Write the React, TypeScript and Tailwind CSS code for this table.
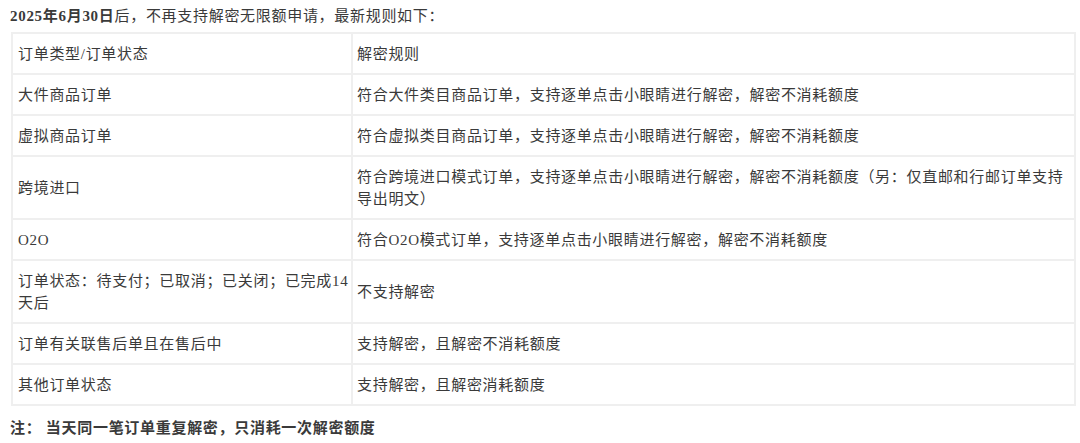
import React from "react";

const rows: [string, string][] = [
  ["订单类型/订单状态", "解密规则"],
  ["大件商品订单", "符合大件类目商品订单，支持逐单点击小眼睛进行解密，解密不消耗额度"],
  ["虚拟商品订单", "符合虚拟类目商品订单，支持逐单点击小眼睛进行解密，解密不消耗额度"],
  ["跨境进口", "符合跨境进口模式订单，支持逐单点击小眼睛进行解密，解密不消耗额度（另：仅直邮和行邮订单支持导出明文）"],
  ["O2O", "符合O2O模式订单，支持逐单点击小眼睛进行解密，解密不消耗额度"],
  ["订单状态：待支付；已取消；已关闭；已完成14天后", "不支持解密"],
  ["订单有关联售后单且在售后中", "支持解密，且解密不消耗额度"],
  ["其他订单状态", "支持解密，且解密消耗额度"],
];

export default function App() {
  return (
    <div
      className="w-[1080px] h-[443px] bg-white text-[#3a3a3a] text-[15px] tracking-[0.7px] leading-[22px] overflow-hidden"
      style={{ fontFamily: '"Liberation Serif", "Noto Sans CJK SC", serif' }}
    >
      <div className="pl-[10px] pt-[4px] h-[30px] leading-[24px]">
        <span className="font-bold">2025年6月30日</span>后，不再支持解密无限额申请，最新规则如下：
      </div>
      <table className="ml-[11px] mt-[2px] w-[1065px] border-collapse border-2 border-[#efefef]">
        <tbody>
          {rows.map(([a, b], i) => (
            <tr key={i}>
              <td className="w-[340px] border-2 border-[#efefef] pl-[5px] pr-0 pt-[9px] pb-[8px] align-middle break-all">{a}</td>
              <td className="border-2 border-[#efefef] pl-[4px] pr-[3px] pt-[9px] pb-[8px] align-middle">{b}</td>
            </tr>
          ))}
        </tbody>
      </table>
      <div className="pl-[10px] pt-[10px] font-bold leading-[24px]">注： 当天同一笔订单重复解密，只消耗一次解密额度</div>
    </div>
  );
}
